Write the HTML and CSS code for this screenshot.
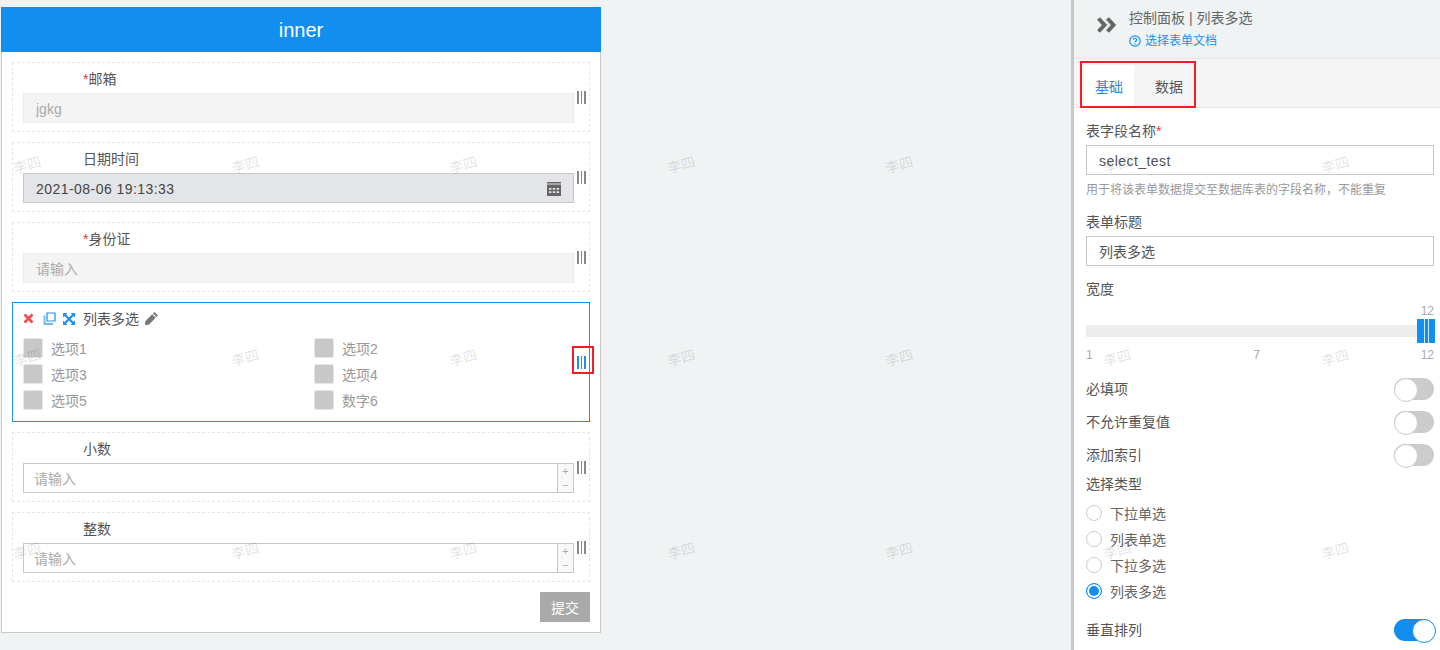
FILE: index.html
```html
<!DOCTYPE html>
<html lang="en">
<head>
    <meta charset="UTF-8">
    <meta name="viewport" content="width=device-width, initial-scale=1.0">
    <title>inner</title>
    <link rel="stylesheet" href="styles.css">
</head>
<body>
    <div class="form-panel">
        <div class="form-title">inner</div>
        <div class="form-body">
            <div class="field">
                <div class="field-main">
                    <div class="field-label"><span class="star">*</span>邮箱</div>
                    <input class="input input-disabled" value="jgkg" readonly>
                </div>
                <div class="handle"></div>
            </div>
            <div class="field">
                <div class="field-main">
                    <div class="field-label">日期时间</div>
                    <div class="input input-date">
                        <span class="latin-text">2021-08-06 19:13:33</span>
                        <svg class="calendar" width="14" height="14" viewBox="0 0 14 14">
                            <path fill="#666" fill-rule="evenodd" d="M0 0h14v1.5H0zM0 2.500h14V14H0zM2 6v1.800h2.400V6zM5.800 6v1.800h2.400V6zM9.600 6v1.800H12V6zM2 9.200V11h2.400V9.200zM5.800 9.200V11h2.400V9.200zM9.600 9.200V11H12V9.200z"/>
                        </svg>
                    </div>
                </div>
                <div class="handle"></div>
            </div>
            <div class="field">
                <div class="field-main">
                    <div class="field-label"><span class="star">*</span>身份证</div>
                    <input class="input input-disabled" placeholder="请输入" readonly>
                </div>
                <div class="handle"></div>
            </div>
            <div class="field field-active">
                <div class="field-main">
                    <div class="toolbar">
                        <svg class="tool-x" width="11" height="11" viewBox="0 0 11 11">
                            <path d="M1.500 1.500l8 8M9.500 1.500l-8 8" stroke="#f44a4f" stroke-width="2.600" fill="none"/>
                        </svg>
                        <svg class="tool-copy" width="13" height="13" viewBox="0 0 13 13">
                            <path d="M4 1h8v8H4z" stroke="#1a90f0" stroke-width="1.200" fill="none"/>
                            <path d="M1.500 3.500v8.500h8.500" stroke="#6db8f5" stroke-width="1.800" fill="none"/>
                        </svg>
                        <svg class="tool-move" width="12" height="12" viewBox="0 0 12 12">
                            <path fill="#1a90f0" d="M0 0h4.500L3 1.500 6 4.500 9 1.500 7.500 0H12v4.500L10.500 3 7.500 6l3 3L12 7.500V12H7.500L9 10.500 6 7.500l-3 3L4.500 12H0V7.500L1.500 9l3-3-3-3L0 4.500z"/>
                        </svg>
                        <span class="tool-name">列表多选</span>
                        <svg class="tool-edit" width="15" height="15" viewBox="0 0 15 15">
                            <path fill="#777" d="M10.500 1l3.500 3.500-1.500 1.500L9 2.500zM8.200 3.300l3.500 3.500-6.900 6.900-3.800.3.300-3.800z"/>
                        </svg>
                    </div>
                    <div class="options">
                        <div class="option"><span class="box"></span>选项1</div>
                        <div class="option"><span class="box"></span>选项2</div>
                        <div class="option"><span class="box"></span>选项3</div>
                        <div class="option"><span class="box"></span>选项4</div>
                        <div class="option"><span class="box"></span>选项5</div>
                        <div class="option"><span class="box"></span>数字6</div>
                    </div>
                </div>
                <div class="handle handle-active"></div>
            </div>
            <div class="field">
                <div class="field-main">
                    <div class="field-label">小数</div>
                    <div class="input input-number">
                        <span>请输入</span>
                        <div class="spinner"><i>+</i><i>−</i></div>
                    </div>
                </div>
                <div class="handle"></div>
            </div>
            <div class="field">
                <div class="field-main">
                    <div class="field-label">整数</div>
                    <div class="input input-number">
                        <span>请输入</span>
                        <div class="spinner"><i>+</i><i>−</i></div>
                    </div>
                </div>
                <div class="handle"></div>
            </div>
            <div class="form-footer">
                <button class="submit-btn">提交</button>
            </div>
        </div>
    </div>

    <div class="side-panel">
        <div class="side-head">
            <svg class="collapse-icon" width="21" height="18" viewBox="0 0 21 18">
                <path d="M2.500 2.500L8.500 9l-6 6.500M11.500 2.500L17.500 9l-6 6.500" stroke="#666" stroke-width="4" fill="none"/>
            </svg>
            <div>
                <div class="side-title">控制面板 | 列表多选</div>
                <div class="side-link">
                    <svg width="12" height="12" viewBox="0 0 12 12">
                        <circle cx="6" cy="6" r="5.200" stroke="#1a90f0" stroke-width="1.200" fill="none"/>
                        <path d="M4.300 4.800C4.300 2.800 7.800 2.800 7.800 4.700 7.800 6 6 5.900 6 7.300" stroke="#1a90f0" stroke-width="1.200" fill="none"/>
                        <path d="M5.400 8.200h1.200v1.200H5.400z" fill="#1a90f0"/>
                    </svg>
                    选择表单文档
                </div>
            </div>
        </div>
        <div class="tabs">
            <div class="tab tab-active">基础</div>
            <div class="tab">数据</div>
            <div class="tabs-mark"></div>
        </div>
        <div class="side-body">
            <div class="side-label label-first">表字段名称<span class="star">*</span></div>
            <input class="side-input side-input-latin latin-text" value="select_test">
            <p class="help">用于将该表单数据提交至数据库表的字段名称，不能重复</p>
            <div class="side-label label-title">表单标题</div>
            <input class="side-input" value="列表多选">
            <div class="side-label label-width">宽度</div>
            <div class="slider-top">12</div>
            <div class="slider">
                <div class="slider-knob"></div>
            </div>
            <div class="slider-scale"><span>1</span><span>7</span><span>12</span></div>
            <div class="switch-row"><span>必填项</span><span class="switch"></span></div>
            <div class="switch-row"><span>不允许重复值</span><span class="switch"></span></div>
            <div class="switch-row"><span>添加索引</span><span class="switch"></span></div>
            <div class="side-label label-type">选择类型</div>
            <div class="radio-row"><span class="radio"></span>下拉单选</div>
            <div class="radio-row"><span class="radio"></span>列表单选</div>
            <div class="radio-row"><span class="radio"></span>下拉多选</div>
            <div class="radio-row"><span class="radio radio-on"></span>列表多选</div>
            <div class="switch-row switch-last"><span>垂直排列</span><span class="switch switch-on"></span></div>
        </div>
    </div>

    <div class="watermarks">
        <span>李四</span><span>李四</span><span>李四</span><span>李四</span><span>李四</span><span>李四</span><span>李四</span>
        <span>李四</span><span>李四</span><span>李四</span><span>李四</span><span>李四</span><span>李四</span><span>李四</span>
        <span>李四</span><span>李四</span><span>李四</span><span>李四</span><span>李四</span><span>李四</span><span>李四</span>
    </div>
</body>
</html>
```

FILE: styles.css
```css
* {
    box-sizing: border-box;
}
html, body {
    height: 650px;
    overflow: hidden;
}
body {
    margin: 0;
    display: flex;
    justify-content: space-between;
    align-items: flex-start;
    position: relative;
    background-color: #eff3f4;
    color: #555;
    font-family: "Liberation Sans", "Noto Sans CJK SC", sans-serif;
    font-size: 14px;
}
.star {
    color: #e33;
}
.latin-text {
    letter-spacing: 0.45px;
}

/* form on the left */
.form-panel {
    width: 600px;
    margin: 7px 0 0 1px;
}
.form-title {
    height: 45px;
    line-height: 46px;
    text-align: center;
    background-color: #118ef0;
    color: #fff;
    font-size: 20px;
}
.form-body {
    background-color: #fff;
    border: 1px solid #c8c8c8;
    border-top: none;
    padding: 10px 10px 10px;
}
.field {
    display: flex;
    align-items: flex-start;
    height: 70px;
    margin-bottom: 10px;
    padding-left: 10px;
    border: 1px dashed #e6e6e6;
}
.field-main {
    width: 551px;
}
.field-label {
    height: 30px;
    line-height: 32px;
    padding-left: 60px;
}
.input {
    display: block;
    width: 100%;
    height: 30px;
    padding: 2px 12px 0;
    border: 1px solid #c8c8c8;
    background-color: #fff;
    color: #555;
    font-family: inherit;
    font-size: 14px;
    outline: none;
}
.input-disabled {
    border-color: #eaeaea;
    background-color: #f4f4f4;
    color: #aaa;
}
.input-disabled::placeholder {
    color: #aaa;
}
.input-date {
    display: flex;
    align-items: center;
    justify-content: space-between;
    background-color: #e4e5e9;
    color: #444;
}
.input-number {
    display: flex;
    align-items: center;
    justify-content: space-between;
    padding: 0 0 0 10px;
    color: #aaa;
}
.spinner {
    display: flex;
    flex-direction: column;
    width: 16px;
    height: 28px;
    border-left: 1px solid #c8c8c8;
    background-color: #f8f8f8;
    color: #aaa;
    font-size: 11px;
    text-align: center;
}
.spinner i {
    flex: 1;
    font-style: normal;
    line-height: 14px;
}
.handle {
    width: 9px;
    height: 13px;
    margin: 28px 0 0 3px;
    background: repeating-linear-gradient(90deg, #888 0 1.500px, transparent 1.500px 3.500px);
}
.field-active {
    height: 120px;
    border: 1px solid #1a90f0;
}
.toolbar {
    display: flex;
    align-items: center;
    height: 35px;
    padding-bottom: 4px;
}
.tool-x {
    margin-right: 9px;
}
.tool-copy {
    margin-right: 7px;
}
.tool-move {
    margin-right: 8px;
}
.tool-name {
    margin-bottom: 2px;
}
.tool-edit {
    margin-left: 5px;
}
.options {
    display: grid;
    grid-template-columns: 291px 260px;
    grid-auto-rows: 26px;
    color: #999;
}
.option {
    display: flex;
    align-items: flex-start;
    line-height: 22px;
}
.box {
    width: 20px;
    height: 20px;
    margin-right: 8px;
    background-color: #c8c8c8;
    border: 1px solid #e6e6e6;
    border-radius: 2px;
}
.handle-active {
    position: relative;
    margin-top: 53px;
    background: repeating-linear-gradient(90deg, #1a90f0 0 1.500px, transparent 1.500px 3.500px);
}
.handle-active::after {
    content: "";
    position: absolute;
    top: -10px;
    right: -8px;
    bottom: -5px;
    left: -5px;
    border: 2px solid #f01f25;
}
.form-footer {
    display: flex;
    justify-content: flex-end;
}
.submit-btn {
    width: 50px;
    height: 30px;
    padding: 0;
    border: none;
    background-color: #a9a9a9;
    color: #fff;
    font-family: inherit;
    font-size: 14px;
}

/* control panel on the right */
.side-panel {
    width: 369px;
    height: 650px;
    border-left: 3px solid #c8c8c8;
    background-color: #fff;
}
.side-head {
    display: flex;
    align-items: flex-start;
    height: 59px;
    padding: 9px 0 0 22px;
    background-color: #eff3f4;
    border-bottom: 1px solid #e6e6e6;
}
.collapse-icon {
    margin: 7px 12px 0 0;
}
.side-title {
    line-height: 18px;
    color: #666;
    font-size: 14px;
}
.side-link {
    display: flex;
    align-items: center;
    gap: 4px;
    margin-top: 6px;
    line-height: 16px;
    color: #1a90f0;
    font-size: 12px;
}
.tabs {
    display: flex;
    position: relative;
    height: 49px;
    padding: 6px 0 0 10px;
    background-color: #f5f5f5;
    border-bottom: 1px solid #e6e6e6;
}
.tab {
    width: 50px;
    height: 42px;
    margin-right: 10px;
    line-height: 44px;
    text-align: center;
}
.tab-active {
    background-color: #fff;
    color: #1a90f0;
}
.tabs-mark {
    position: absolute;
    top: 2px;
    left: 6px;
    width: 116px;
    height: 47px;
    border: 2px solid #f01f25;
}
.side-body {
    padding: 0 6px 0 12px;
}
.side-label {
    line-height: 20px;
}
.label-first {
    padding-top: 13px;
    height: 37px;
}
.label-title {
    margin-top: 14px;
    height: 24px;
}
.label-width {
    margin-top: 13px;
}
.label-type {
    margin-top: 4px;
}
.side-input {
    display: block;
    width: 100%;
    height: 30px;
    padding: 0 12px;
    border: 1px solid #c8c8c8;
    background-color: #fff;
    color: #555;
    font-family: inherit;
    font-size: 14px;
    outline: none;
}
.side-input-latin {
    padding-top: 2px;
}
.help {
    margin: 7px 0 0;
    line-height: 16px;
    color: #999;
    font-size: 12px;
}
.slider-top {
    margin-top: 5px;
    line-height: 14px;
    color: #aaa;
    font-size: 12px;
    text-align: right;
}
.slider {
    position: relative;
    height: 12px;
    margin-top: 7px;
    background-color: #ededed;
}
.slider-knob {
    position: absolute;
    top: -6px;
    right: -1px;
    width: 18px;
    height: 24px;
    background: linear-gradient(90deg, #118ef0 0 7px, #cfe8fc 7px 8px, #118ef0 8px 11px, #cfe8fc 11px 12px, #118ef0 12px);
}
.slider-scale {
    display: flex;
    justify-content: space-between;
    margin-top: 11px;
    line-height: 14px;
    color: #aaa;
    font-size: 12px;
}
.switch-row {
    display: flex;
    align-items: center;
    justify-content: space-between;
    height: 33px;
}
.slider-scale + .switch-row {
    margin-top: 9px;
}
.switch {
    position: relative;
    width: 40px;
    height: 22px;
    margin-top: 3px;
    border-radius: 11px;
    background-color: #ccc;
}
.switch::after {
    content: "";
    position: absolute;
    top: 0;
    left: 0;
    width: 22px;
    height: 22px;
    border: 1px solid #ccc;
    border-radius: 50%;
    background-color: #fff;
}
.switch-on {
    margin-top: 2px;
    background-color: #118ef0;
}
.switch-on::after {
    left: 18px;
    border-color: #118ef0;
}
.radio-row {
    display: flex;
    align-items: center;
    height: 26px;
    color: #666;
}
.label-type + .radio-row {
    margin-top: 6px;
}
.radio {
    width: 16px;
    height: 16px;
    margin-right: 8px;
    border: 1px solid #ccc;
    border-radius: 50%;
    background-color: #fff;
}
.radio-on {
    border-color: #118ef0;
    background-color: #118ef0;
    box-shadow: inset 0 0 0 2px #fff;
}
.switch-last {
    margin-top: 7px;
    height: 36px;
}

/* watermark layer */
.watermarks {
    position: absolute;
    top: 67px;
    left: -82px;
    display: grid;
    grid-template-columns: repeat(7, 218px);
    grid-auto-rows: 193px;
    pointer-events: none;
    color: rgba(0, 0, 0, 0.13);
    font-size: 14px;
}
.watermarks span {
    align-self: center;
    justify-self: center;
    transform: rotate(-15deg);
}
```
